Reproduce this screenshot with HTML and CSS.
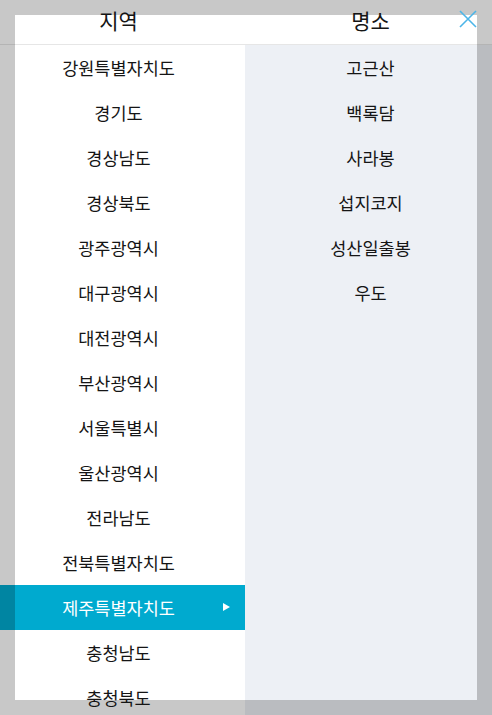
FILE: index.html
```html
<!DOCTYPE html>
<html lang="ko">
<head>
<meta charset="utf-8">
<title>지역 / 명소</title>
<link rel="stylesheet" href="styles.css">
</head>
<body>
<div class="app">
  <div class="header">
    <div class="h-left"><span class="label">지역</span></div>
    <div class="h-right"><span class="label">명소</span></div>
  </div>
  <div class="content">
    <ul class="regions">
      <li><span class="label">강원특별자치도</span></li>
      <li><span class="label">경기도</span></li>
      <li><span class="label">경상남도</span></li>
      <li><span class="label">경상북도</span></li>
      <li><span class="label">광주광역시</span></li>
      <li><span class="label">대구광역시</span></li>
      <li><span class="label">대전광역시</span></li>
      <li><span class="label">부산광역시</span></li>
      <li><span class="label">서울특별시</span></li>
      <li><span class="label">울산광역시</span></li>
      <li><span class="label">전라남도</span></li>
      <li><span class="label">전북특별자치도</span></li>
      <li class="active"><span class="label">제주특별자치도</span><span class="arrow"></span></li>
      <li><span class="label">충청남도</span></li>
      <li><span class="label">충청북도</span></li>
    </ul>
    <ul class="spots">
      <li><span class="label">고근산</span></li>
      <li><span class="label">백록담</span></li>
      <li><span class="label">사라봉</span></li>
      <li><span class="label">섭지코지</span></li>
      <li><span class="label">성산일출봉</span></li>
      <li><span class="label">우도</span></li>
    </ul>
  </div>
  <button class="close" aria-label="닫기">
    <svg width="18" height="18" viewBox="0 0 18 18"><path d="M1 1 L17 17 M17 1 L1 17" stroke="#4cb5e8" stroke-width="1.6" fill="none"/></svg>
  </button>
  <div class="frame"></div>
</div>
</body>
</html>
```
FILE: styles.css
```css
html, body {
  margin: 0;
  padding: 0;
}
body {
  width: 492px;
  height: 715px;
  overflow: hidden;
  background: #fff;
  font-family: "Noto Sans CJK KR", "Noto Sans", sans-serif;
  color: #151515;
}
.app {
  position: relative;
  width: 492px;
  height: 715px;
  overflow: hidden;
}
.header {
  display: flex;
  height: 44px;
  border-bottom: 1px solid #e6e6e6;
  background: #fff;
  font-size: 21px;
  line-height: 40px;
}
.h-left {
  width: 237px;
  padding-right: 8px;
  text-align: center;
}
.h-right {
  flex: 1;
  padding-left: 4px;
  text-align: center;
}
.content {
  display: flex;
  height: 670px;
}
ul {
  list-style: none;
  margin: 0;
  padding: 0;
}
.regions {
  width: 245px;
  background: #fff;
}
.spots {
  flex: 1;
  background: #edf0f5;
  padding-left: 4px;
}
li {
  height: 45px;
  line-height: 45px;
  font-size: 17.5px;
  text-align: center;
  position: relative;
}
.regions li {
  padding-right: 8px;
}
.regions li.active {
  background: #00aacf;
  color: #fff;
}
.arrow {
  position: absolute;
  top: 18px;
  right: 15px;
  width: 0;
  height: 0;
  border-left: 7px solid #fff;
  border-top: 4px solid transparent;
  border-bottom: 4px solid transparent;
  z-index: 2;
}
.label {
  position: relative;
  z-index: 2;
}
.close {
  position: absolute;
  top: 10px;
  left: 459px;
  width: 18px;
  height: 18px;
  padding: 0;
  border: 0;
  background: transparent;
  z-index: 2;
}
.close svg {
  display: block;
}
.frame {
  position: absolute;
  inset: 0;
  border-style: solid;
  border-color: rgba(0, 0, 0, 0.216);
  border-width: 15px 15px 15px 15px;
  z-index: 1;
  pointer-events: none;
}
```
